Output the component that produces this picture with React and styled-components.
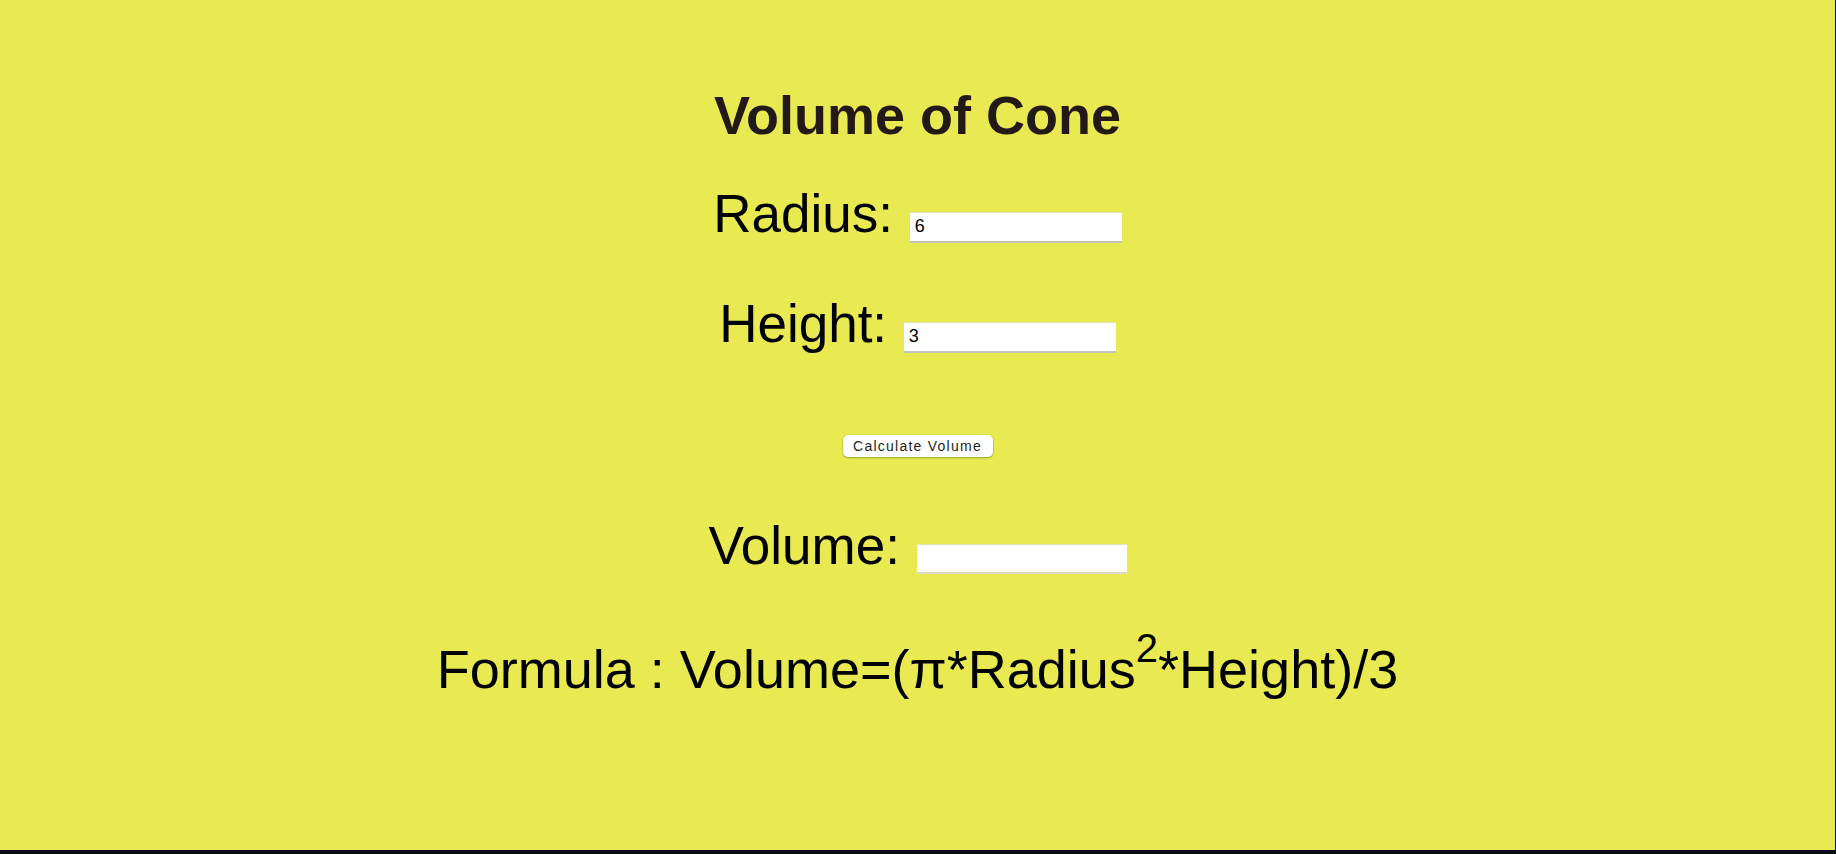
import React, { useState } from "react";
import styled, { createGlobalStyle } from "styled-components";

const Global = createGlobalStyle`
  html, body { margin: 0; padding: 0; }
  body {
    background: #0c0b1c;
    font-family: "Liberation Sans", Arial, sans-serif;
    overflow: hidden;
  }
`;

const Page = styled.main`
  width: calc(100vw - 1px);
  height: calc(100vh - 4px);
  background: #e9ea52;
  display: flex;
  flex-direction: column;
  align-items: center;
  box-sizing: border-box;
  padding-top: 85px;
`;

const Title = styled.h1`
  margin: 0;
  font-size: 54px;
  line-height: 61px;
  font-weight: 700;
  color: #231a18;
`;

const Row = styled.div`
  margin-top: ${(p) => p.$top}px;
  font-size: ${(p) => p.$size || 53}px;
  line-height: 61px;
  color: #000;
  white-space: nowrap;
`;

const Field = styled.input`
  box-sizing: border-box;
  width: ${(p) => p.$w}px;
  height: ${(p) => p.$h}px;
  margin: 0 0 0 2px;
  padding: 0 4px 0 5px;
  border: none;
  border-top: 1px solid #e4e2b8;
  border-bottom: 2px solid ${(p) => (p.readOnly ? "#dcdcc8" : "#c4c4c0")};
  background: #fff;
  font-family: "Liberation Sans", Arial, sans-serif;
  font-size: 18px;
  color: #000;
  outline: none;
  vertical-align: baseline;
`;

const Button = styled.button`
  margin-top: 81px;
  width: 150px;
  height: 22px;
  padding: 0;
  border: none;
  border-radius: 5px;
  background: #fff;
  box-shadow: 0 1px 2px rgba(0, 0, 0, 0.3), 0 0 0 0.5px rgba(0, 0, 0, 0.08);
  font-family: "Liberation Sans", Arial, sans-serif;
  font-size: 14px;
  letter-spacing: 1.25px;
  color: #1e1e1e;
  cursor: pointer;
`;

const Sup = styled.sup`
  font-size: 40px;
  line-height: 0;
  vertical-align: 26px;
`;

export default function App() {
  const [radius, setRadius] = useState("6");
  const [height, setHeight] = useState("3");
  const [volume, setVolume] = useState("");

  const calc = () => {
    const r = parseFloat(radius);
    const h = parseFloat(height);
    if (!isNaN(r) && !isNaN(h)) setVolume(((Math.PI * r * r * h) / 3).toFixed(2));
  };

  return (
    <>
      <Global />
      <Page>
        <Title>Volume of Cone</Title>
        <Row $top={37}>
          Radius:{" "}
          <Field $w={212} $h={31} value={radius} onChange={(e) => setRadius(e.target.value)} />
        </Row>
        <Row $top={49}>
          Height:{" "}
          <Field $w={212} $h={31} value={height} onChange={(e) => setHeight(e.target.value)} />
        </Row>
        <Button onClick={calc}>Calculate Volume</Button>
        <Row $top={58}>
          Volume:{" "}
          <Field $w={210} $h={30} readOnly value={volume} />
        </Row>
        <Row $top={63} $size={54}>
          Formula : Volume=(π*Radius<Sup>2</Sup>*Height)/3
        </Row>
      </Page>
    </>
  );
}
